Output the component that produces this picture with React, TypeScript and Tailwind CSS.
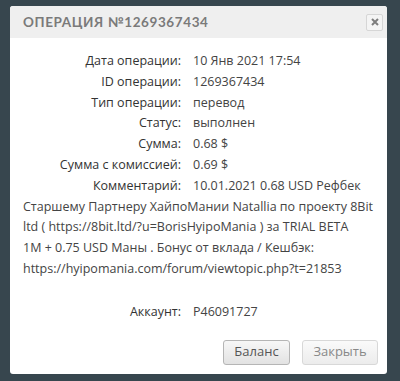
import React from 'react';

interface Row {
  label: string;
  value: React.ReactNode;
  strong?: boolean;
}

const rows: Row[] = [
  { label: 'Дата операции:', value: '10 Янв 2021 17:54' },
  { label: 'ID операции:', value: '1269367434' },
  { label: 'Тип операции:', value: 'перевод' },
  { label: 'Статус:', value: 'выполнен' },
  { label: 'Сумма:', value: '0.68 $' },
  { label: 'Сумма с комиссией:', value: '0.69 $' },
  {
    label: 'Комментарий:',
    strong: true,
    value: (
      <>
        10.01.2021 0.68 USD Рефбек
        <br />
        Старшему Партнеру ХайпоМании Natallia по проекту 8Bit
        <br />
        ltd ( https://8bit.ltd/?u=BorisHyipoMania ) за TRIAL BETA
        <br />
        1M + 0.75 USD Маны . Бонус от вклада / Кешбэк:
        <br />
        https://hyipomania.com/forum/viewtopic.php?t=21853
      </>
    ),
  },
];

export default function App() {
  return (
    <div className="w-[400px] h-[381px] bg-[#37464e] pt-[6px] pl-[10px] pr-[13px] font-['Open_Sans',sans-serif]">
      <div className="bg-white rounded-[3px] overflow-hidden">
        {/* заголовок */}
        <div className="h-[32px] bg-[#efefef] flex items-center justify-between pl-[13px] pr-[4px]">
          <h2 className="text-[13.5px] font-bold tracking-[0.6px] text-[#7a7a7a] uppercase font-['Lato',sans-serif]">
            Операция №1269367434
          </h2>
          <button className="w-[17px] h-[17px] rounded-[2px] border border-[#d6d6d6] bg-[#f4f4f4] flex items-center justify-center">
            <svg width="8" height="8" viewBox="0 0 8 8">
              <path d="M1 1 L7 7 M7 1 L1 7" stroke="#7d7d7d" strokeWidth="2" />
            </svg>
          </button>
        </div>

        {/* содержимое */}
        <div className="pt-[13px] px-[13px] text-[12.5px] leading-[20.8px] text-[#444]">
          {rows.map((row) => (
            <div key={row.label}>
              <span
                className={`inline-block w-[158px] text-right text-[#333] mr-[12px] ${
                  row.strong ? 'font-medium' : ''
                }`}
              >
                {row.label}
              </span>
              {row.value}
            </div>
          ))}
          <div className="mt-[22px]">
            <span className="inline-block w-[158px] text-right text-[#333] mr-[12px] font-medium">
              Аккаунт:
            </span>
            P46091727
          </div>
        </div>

        {/* кнопки */}
        <div className="flex justify-end gap-[12px] pt-[17px] pb-[9px] pr-[9px]">
          <button className="w-[67px] h-[25px] rounded-[3px] border border-[#b5b5b5] bg-gradient-to-b from-[#f7f7f7] to-[#e2e2e2] text-[13px] font-normal text-[#555]">
            Баланс
          </button>
          <button className="w-[76px] h-[25px] rounded-[3px] border border-[#d8d8d8] bg-gradient-to-b from-[#fafafa] to-[#ececec] text-[13px] font-normal text-[#888]">
            Закрыть
          </button>
        </div>
      </div>
    </div>
  );
}
